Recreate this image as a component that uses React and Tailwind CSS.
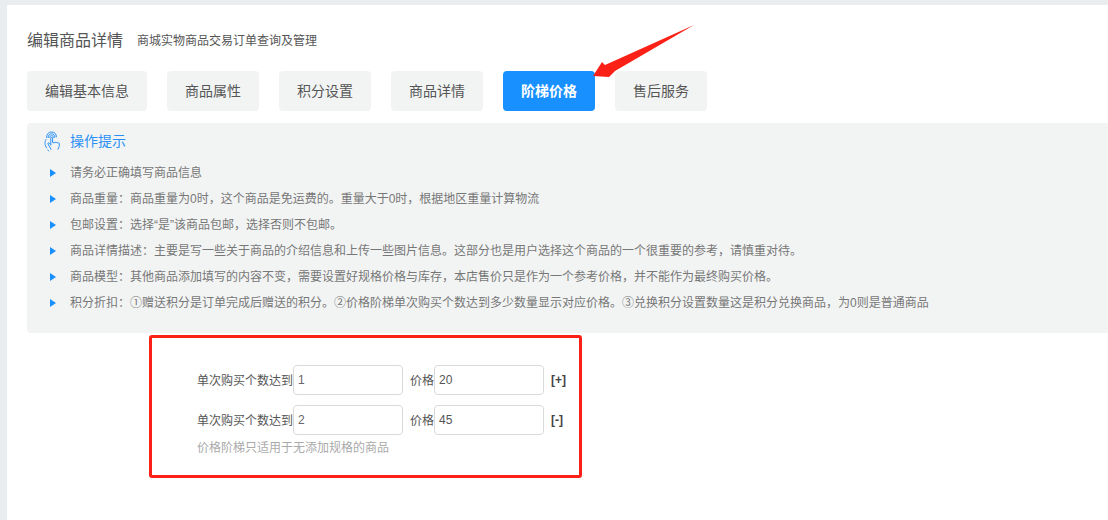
import React from 'react'

const tabs = ['编辑基本信息', '商品属性', '积分设置', '商品详情', '阶梯价格', '售后服务']

const tips = [
  '请务必正确填写商品信息',
  '商品重量：商品重量为0时，这个商品是免运费的。重量大于0时，根据地区重量计算物流',
  '包邮设置：选择“是”该商品包邮，选择否则不包邮。',
  '商品详情描述：主要是写一些关于商品的介绍信息和上传一些图片信息。这部分也是用户选择这个商品的一个很重要的参考，请慎重对待。',
  '商品模型：其他商品添加填写的内容不变，需要设置好规格价格与库存，本店售价只是作为一个参考价格，并不能作为最终购买价格。',
  '积分折扣：①赠送积分是订单完成后赠送的积分。②价格阶梯单次购买个数达到多少数量显示对应价格。③兑换积分设置数量这是积分兑换商品，为0则是普通商品',
]

const tiers = [
  { count: '1', price: '20', action: '[+]' },
  { count: '2', price: '45', action: '[-]' },
]

function HandIcon() {
  return (
    <svg width="18" height="21" viewBox="0 0 18 21" fill="none" stroke="#2a90f5" strokeWidth="1" strokeLinecap="round" strokeLinejoin="round">
      <path d="M2.6 6.5C2.4 3 4.6 1 7.6 1s5 2 4.8 5" />
      <path d="M4.2 6.5C4.1 4.2 5.6 2.8 7.6 2.8s3.3 1.4 3.2 3.6" />
      <path d="M5.8 6.5C5.8 5.2 6.5 4.6 7.6 4.6s1.7.6 1.7 1.9" />
      <path d="M6.8 14V7.2c0-1 1.8-1 1.8 0V11.5l1.8.4c0-1 1.6-1 1.6 0 .2-.8 1.6-.7 1.6.2.4-.6 1.8-.4 1.8.6 0 2.2-.4 3.6-1.4 5.6" />
      <path d="M6.8 13.6 5.2 12c-.8-.6-1.6.2-1.2 1l3 5.4" />
      <path d="M2 8.5C.4 11 .6 14 2.6 16.8" />
      <path d="M3.6 18.8 4.8 20" />
    </svg>
  )
}

function Triangle() {
  return (
    <svg width="6" height="8" viewBox="0 0 6 8" className="shrink-0">
      <path d="M0 0l6 4-6 4z" fill="#1890ff" />
    </svg>
  )
}

export default function App() {
  return (
    <div
      className="relative h-[520px] w-[1108px] overflow-hidden bg-[#e9edf0] pl-[7px] pt-[5px]"
      style={{ fontFamily: '"Liberation Sans", "Noto Sans CJK SC", sans-serif' }}
    >
      <div className="h-[515px] bg-white pl-5">
        {/* Title */}
        <div className="flex h-[66px] items-end pb-[18px]">
          <span className="text-base leading-6 text-[#555]">编辑商品详情</span>
          <span className="ml-[14px] text-xs leading-6 text-[#555]">商城实物商品交易订单查询及管理</span>
        </div>

        {/* Tabs */}
        <div className="flex gap-5">
          {tabs.map((tab) => (
            <div
              key={tab}
              className={`flex h-10 items-center rounded px-[18px] text-sm ${
                tab === '阶梯价格' ? 'bg-[#1890ff] font-semibold text-white' : 'bg-[#f2f4f4] text-[#555]'
              }`}
            >
              {tab}
            </div>
          ))}
        </div>

        {/* Tips */}
        <div className="mt-3 h-[210px] rounded-l bg-[#f2f4f4] pl-[17px] pt-2">
          <div className="flex h-5 items-center gap-2">
            <HandIcon />
            <span className="text-sm text-[#2a90f5]">操作提示</span>
          </div>
          <ul className="mt-[9px] pl-[6px]">
            {tips.map((tip) => (
              <li key={tip} className="flex h-[26px] items-center gap-[14px] text-xs text-[#777]">
                <Triangle />
                {tip}
              </li>
            ))}
          </ul>
        </div>

        {/* Price tiers */}
        <div className="ml-[122px] mt-[2px] h-[143px] w-[433px] rounded-[3px] border-[3px] border-[#fb2116] pl-[45px] pt-[27px]">
          <div className="flex flex-col gap-[10px]">
            {tiers.map((tier) => (
              <div key={tier.count} className="flex h-[30px] items-center text-xs text-[#555]">
                <span className="w-24 pt-px">单次购买个数达到</span>
                <input
                  readOnly
                  value={tier.count}
                  className="h-[30px] w-[110px] rounded border border-[#d9d9d9] px-[4px] text-xs text-[#666] outline-none"
                />
                <span className="ml-[7px] w-6 pt-px">价格</span>
                <input
                  readOnly
                  value={tier.price}
                  className="h-[30px] w-[110px] rounded border border-[#d9d9d9] px-[4px] text-xs text-[#555] outline-none"
                />
                <span className="ml-[7px] font-bold text-[#444]">{tier.action}</span>
              </div>
            ))}
          </div>
          <p className="mt-[4px] text-xs leading-[18px] text-[#aaa]">价格阶梯只适用于无添加规格的商品</p>
        </div>
      </div>

      {/* Annotation arrow */}
      <svg className="absolute left-[590px] top-[20px]" width="110" height="62" viewBox="590 20 110 62">
        <path d="M694 25 615 71 609 77 593 76 602 62 605 65Z" fill="#fb2116" />
      </svg>
    </div>
  )
}
